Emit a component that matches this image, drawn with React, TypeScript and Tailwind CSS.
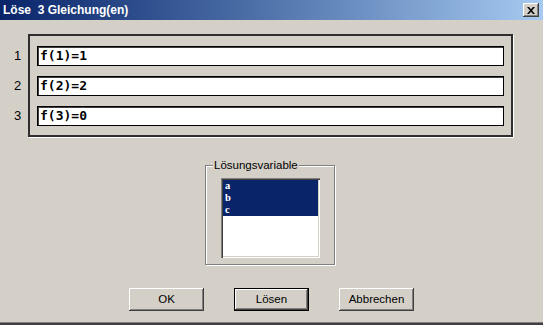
import React from "react";

const raised =
  "bg-[#d4d0c8] shadow-[inset_-1px_-1px_#404040,inset_1px_1px_#ffffff,inset_-2px_-2px_#808080,inset_2px_2px_#d4d0c8]";

const equations = ["f(1)=1", "f(2)=2", "f(3)=0"];
const variables = ["a", "b", "c"];

const Button = ({ label, isDefault }: { label: string; isDefault?: boolean }) => (
  <div
    className={`w-[75px] h-[23px] flex items-center justify-center ${
      isDefault ? "border border-black" : ""
    }`}
  >
    <div
      className={`${raised} w-full h-full flex items-center justify-center text-[11.5px] text-black`}
      style={{ fontFamily: '"Liberation Sans", Arial, sans-serif' }}
    >
      {label}
    </div>
  </div>
);

const App = () => {
  return (
    <div
      className="w-[543px] h-[325px] bg-[#d4d0c8] flex flex-col overflow-hidden"
      style={{ fontFamily: '"Liberation Sans", Arial, sans-serif' }}
    >
      {/* title bar */}
      <div className="h-[20px] bg-gradient-to-r from-[#0a246a] to-[#a6caf0] flex items-center justify-between pl-[3px] pr-[4px]">
        <span className="text-white font-bold text-[12px] leading-none whitespace-pre">
          Löse  3 Gleichung(en)
        </span>
        <div className={`${raised} w-[16px] h-[14px] flex items-center justify-center`}>
          <svg width="8" height="7" viewBox="0 0 8 7">
            <path d="M0 0h2l2 2.2L6 0h2L5 3.5 8 7H6L4 4.8 2 7H0l3-3.5z" fill="#000" />
          </svg>
        </div>
      </div>

      {/* equations */}
      <div className="flex mt-[14px]">
        <div className="w-[28px] pl-[14px] pt-[12px] flex flex-col gap-[10px]">
          {["1", "2", "3"].map((n) => (
            <div key={n} className="h-[20px] flex items-center text-[13px] text-black">
              {n}
            </div>
          ))}
        </div>
        <div className="w-[485px] h-[103px] border-2 border-[#2e2e2e] shadow-[1px_1px_#ffffff] px-[7px] pt-[10px] flex flex-col gap-[10px]">
          {equations.map((eq) => (
            <div
              key={eq}
              className="h-[20px] w-[467px] bg-white border border-black shadow-[inset_1px_1px_#404040] flex items-center pl-[2px] text-[13px] font-bold text-black"
              style={{ fontFamily: '"DejaVu Sans Mono", "Liberation Mono", monospace' }}
            >
              {eq}
            </div>
          ))}
        </div>
      </div>

      {/* group box */}
      <div className="ml-[205px] mt-[28px] w-[130px] h-[100px] relative border border-[#808080] shadow-[inset_1px_1px_#ffffff,1px_1px_#ffffff]">
        <span className="absolute left-[7px] top-[-8px] px-[1px] bg-[#d4d0c8] text-[11.5px] leading-[14px] text-black">
          Lösungsvariable
        </span>
        <div className="ml-[15px] mt-[12px] w-[99px] h-[80px] bg-white p-[2px] shadow-[inset_1px_1px_#808080,inset_2px_2px_#404040,inset_-1px_-1px_#ffffff,inset_-2px_-2px_#d4d0c8]">
          {variables.map((v) => (
            <div
              key={v}
              className="h-[12px] bg-[#0a246a] text-white text-[10.5px] font-bold leading-[12px] pl-[2px]"
              style={{ fontFamily: '"Liberation Serif", "Times New Roman", serif' }}
            >
              {v}
            </div>
          ))}
        </div>
      </div>

      {/* buttons */}
      <div className="flex gap-[30px] pl-[129px] mt-[23px]">
        <Button label="OK" />
        <Button label="Lösen" isDefault />
        <Button label="Abbrechen" />
      </div>

      <div className="mt-auto h-[3px] border-t border-[#808080] bg-[#404040]" />
    </div>
  );
};

export default App;
